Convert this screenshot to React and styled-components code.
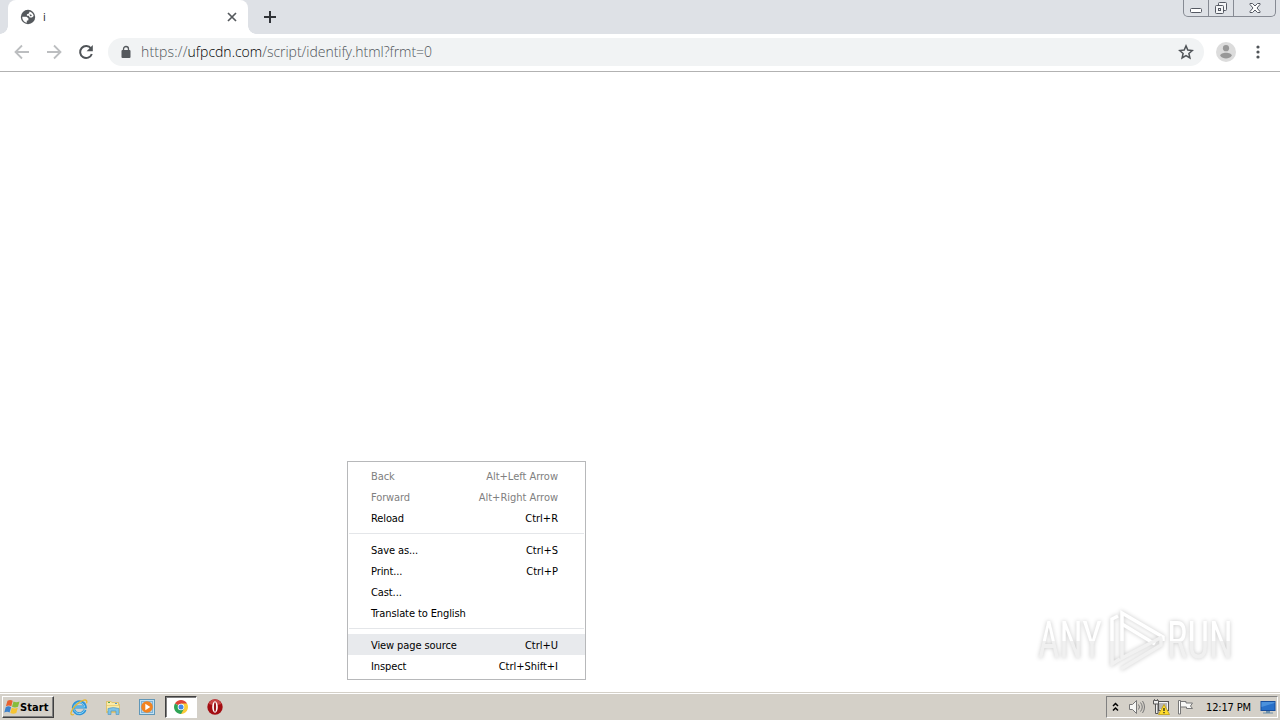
import React from 'react'
import styled, { createGlobalStyle } from 'styled-components'

const GlobalStyle = createGlobalStyle`
  body {
    margin: 0;
    background: #fff;
    overflow: hidden;
  }
  svg {
    display: block;
    flex: none;
  }
`

const Desktop = styled.div`
  position: relative;
  display: flex;
  flex-direction: column;
  width: 1280px;
  height: 720px;
  font-family: 'DejaVu Sans Condensed', 'DejaVu Sans', sans-serif;
  font-stretch: condensed;
  font-size: 11px;
  color: #000;
`

const TabStrip = styled.div`
  display: flex;
  height: 34px;
  background: #dee1e6;
  padding-left: 8px;
`

const Tab = styled.div`
  position: relative;
  box-sizing: border-box;
  display: flex;
  align-items: center;
  width: 240px;
  padding: 0 10px 0 12px;
  background: #fff;
  border-radius: 8px 8px 0 0;

  &::before,
  &::after {
    content: '';
    position: absolute;
    bottom: 0;
    width: 8px;
    height: 8px;
  }
  &::before {
    left: -8px;
    background: radial-gradient(circle at 0 0, #dee1e6 7.5px, #fff 8px);
  }
  &::after {
    right: -8px;
    background: radial-gradient(circle at 100% 0, #dee1e6 7.5px, #fff 8px);
  }
`

const TabTitle = styled.div`
  flex: 1;
  margin-left: 7px;
  color: #202124;
`

const NewTab = styled.div`
  display: flex;
  align-items: center;
  margin-left: 15px;
`

const WindowButtons = styled.div`
  box-sizing: border-box;
  display: flex;
  width: 93px;
  height: 17px;
  margin: 0 4px 0 auto;
  border: 1px solid #868a93;
  border-top: 0;
  border-radius: 0 0 5px 5px;
`

const WindowButton = styled.div`
  box-sizing: border-box;
  display: flex;
  align-items: center;
  justify-content: center;
  width: ${({ $width }) => $width}px;
  border-right: ${({ $last }) => ($last ? '0' : '1px solid #868a93')};
`

const Toolbar = styled.div`
  box-sizing: border-box;
  display: flex;
  align-items: center;
  height: 38px;
  padding: 0 12px 1px 12px;
  background: #fff;
  border-bottom: 1px solid #b2b2b2;
`

const NavButton = styled.div`
  display: flex;
  justify-content: center;
  width: 20px;
  margin-right: 12px;
`

const Omnibox = styled.div`
  box-sizing: border-box;
  display: flex;
  align-items: center;
  width: 1096px;
  height: 28px;
  padding: 0 10px 0 13px;
  background: #f1f3f4;
  border-radius: 14px;
`

const Url = styled.div`
  display: flex;
  flex: 1;
  margin-left: 10px;
  font-family: 'Open Sans', 'Noto Sans', sans-serif;
  font-stretch: normal;
  font-weight: 300;
  font-size: 14px;
  line-height: 20px;
`

const UrlPart = styled.span`
  color: ${({ $strong }) => ($strong ? '#000' : '#50555a')};
  letter-spacing: ${({ $spacing }) => $spacing || 0}px;
`

const Avatar = styled.div`
  margin-left: 12px;
`

const Dots = styled.div`
  margin-left: 20px;
`

const Page = styled.div`
  flex: 1;
  background: #fff;
`

const Menu = styled.div`
  position: absolute;
  left: 347px;
  top: 461px;
  box-sizing: border-box;
  width: 239px;
  height: 219px;
  padding-top: 3px;
  background: #fff;
  border: 1px solid #b7b8ba;
`

const MenuItem = styled.div`
  display: flex;
  justify-content: space-between;
  height: 21px;
  padding: 0 27px 0 23px;
  line-height: 23px;
  color: ${({ $disabled }) => ($disabled ? '#808080' : '#000')};
  background: ${({ $hover }) => ($hover ? '#e8eaed' : 'transparent')};
`

const MenuText = styled.span`
  letter-spacing: ${({ $spacing }) => $spacing || 0}px;
  margin-right: ${({ $spacing }) => -($spacing || 0)}px;
  white-space: nowrap;
`

const Separator = styled.div`
  height: 1px;
  margin: 5px 1px;
  background: #e4e6e9;
`

const Watermark = styled.div`
  position: absolute;
  left: 1038px;
  top: 609px;
  display: flex;
  align-items: flex-start;
  filter: drop-shadow(0 0 2px rgba(0, 0, 0, 0.22));
`

const WatermarkWord = styled.span`
  width: ${({ $width }) => $width}px;
  font-family: Roboto, sans-serif;
  font-size: 52px;
  line-height: 64px;
  white-space: nowrap;
`

const Squeezed = styled.span`
  display: inline-block;
  transform: scaleX(${({ $scale }) => $scale});
  transform-origin: 0 50%;
  color: transparent;
  background: linear-gradient(#fff 50%, #f0f0f0 50%);
  background-clip: text;
`

const Taskbar = styled.div`
  box-sizing: border-box;
  display: flex;
  align-items: flex-start;
  height: 28px;
  padding: 2px 2px 0 2px;
  background: #d4d0c8;
  border-top: 1px solid #d4d0c8;
  box-shadow: inset 0 1px #fff;
`

const StartButton = styled.div`
  box-sizing: border-box;
  display: flex;
  align-items: center;
  width: 52px;
  height: 22px;
  margin-top: 1px;
  padding-left: 1px;
  border: 1px solid;
  border-color: #fff #404040 #404040 #fff;
  box-shadow: inset -1px -1px #808080;
  font-weight: bold;
  letter-spacing: 0.1px;
`

const StartLabel = styled.span`
  margin-left: -1px;
`

const TaskButton = styled.div`
  box-sizing: border-box;
  display: flex;
  align-items: center;
  justify-content: center;
  width: 32px;
  height: 22px;
  margin: 1px 0 0 ${({ $gap }) => $gap || 2}px;
  background: ${({ $active }) => ($active ? '#fff' : 'transparent')};
  border: ${({ $active }) => ($active ? '1px solid' : '0')};
  border-color: #404040 #fff #fff #404040;
  box-shadow: ${({ $active }) => ($active ? 'inset 1px 1px #808080' : 'none')};
`

const Tray = styled.div`
  box-sizing: border-box;
  display: flex;
  align-items: center;
  width: 172px;
  height: 22px;
  margin: 1px 0 0 auto;
  padding-left: 5px;
  border: 1px solid;
  border-color: #808080 #fff #fff #808080;
`

const Clock = styled.div`
  width: 46px;
  margin: 0 8px 0 12px;
  font-size: 11px;
  letter-spacing: -0.15px;
  white-space: nowrap;
`

const TrayIcon = styled.div`
  margin-left: ${({ $gap }) => $gap}px;
`

const GlobeIcon = () => (
  <svg width="16" height="16" viewBox="0 0 16 16">
    <circle cx="8" cy="8" r="7.2" fill="#55595d" />
    <path d="M9.600 2.500c2.200.6 3.800 2.300 4.100 4.500l-1.700 1.400H9.800L8.700 6.700H6.900V5.300l2-.8Z" fill="#fff" />
    <path d="M2.300 7.800h4.200l1.900 1.400v2l-1.600.5v2C4.200 13.300 2.100 10.900 2.300 7.800Z" fill="#fff" />
    <path d="m9.500 5.200 1.800.5.5 1.200-1.600.4Z" fill="#55595d" />
  </svg>
)

const CloseIcon = () => (
  <svg width="12" height="12" viewBox="0 0 12 12" stroke="#55595d" strokeWidth="1.7">
    <path d="m2 2 8 8M10 2l-8 8" />
  </svg>
)

const PlusIcon = () => (
  <svg width="14" height="14" viewBox="0 0 14 14" stroke="#303338" strokeWidth="2">
    <path d="M7 1v12M1 7h12" />
  </svg>
)

const MinimizeIcon = () => (
  <svg width="14" height="12" viewBox="0 0 14 12">
    <rect x="1.500" y="6.500" width="11" height="4" rx="1" fill="#fff" stroke="#555963" />
  </svg>
)

const RestoreIcon = () => (
  <svg width="14" height="14" viewBox="0 0 14 14" fill="#f4f5f7" stroke="#555963">
    <rect x="4.5" y="1.5" width="8" height="8" rx="1" />
    <rect x="1.5" y="4.5" width="8" height="8" rx="1" />
    <rect x="4.5" y="7.5" width="2" height="2" />
  </svg>
)

const WindowCloseIcon = () => (
  <svg width="14" height="12" viewBox="0 0 14 12">
    <path d="M2 1.500h2.500L7 4l2.500-2.500H12v1L9 6l3 3.500v1H9.500L7 8l-2.500 2.500H2v-1L5 6 2 2.500Z" fill="#fff" stroke="#555963" />
  </svg>
)

const ArrowIcon = ({ flip }) => (
  <svg width="16" height="16" viewBox="0 0 16 16" fill="none" stroke="#bcbec0" strokeWidth="1.8">
    <path d={flip ? 'M1 8h13M8 1.5 14.5 8 8 14.5' : 'M15 8H2M8 1.5 1.5 8 8 14.5'} />
  </svg>
)

const ReloadIcon = () => (
  <svg width="16" height="16" viewBox="0 0 16 16">
    <path d="M13 4.5A6 6 0 1 0 13.8 10" fill="none" stroke="#505458" strokeWidth="2" />
    <path d="M14.8 1v6.2H8.6Z" fill="#505458" />
  </svg>
)

const LockIcon = () => (
  <svg width="10" height="14" viewBox="0 0 10 14">
    <rect x="0.5" y="5" width="9" height="8" rx="1" fill="#55595d" />
    <path d="M2.5 5.5V4a2.5 2.5 0 0 1 5 0v1.500" fill="none" stroke="#55595d" strokeWidth="1.3" />
  </svg>
)

const StarIcon = () => (
  <svg width="16" height="16" viewBox="0 0 16 16">
    <path d="m8 1.900 1.800 4.200 4.500.4-3.400 3 1 4.500L8 11.600 4.100 14l1-4.500-3.400-3 4.500-.4Z" fill="none" stroke="#505458" strokeWidth="1.500" />
  </svg>
)

const AvatarIcon = () => (
  <svg width="20" height="20" viewBox="0 0 20 20">
    <circle cx="10" cy="10" r="10" fill="#dcdcdc" />
    <circle cx="10" cy="6.200" r="3.100" fill="#989898" />
    <path d="M4.200 13.700c0-4 11.600-4 11.600 0-2.600 3.700-9 3.700-11.600 0Z" fill="#989898" />
  </svg>
)

const DotsIcon = () => (
  <svg width="4" height="14" viewBox="0 0 4 14" fill="#505458">
    <circle cx="2" cy="2" r="1.600" />
    <circle cx="2" cy="7" r="1.600" />
    <circle cx="2" cy="12" r="1.600" />
  </svg>
)

const PlayLogo = () => (
  <svg width="62" height="64" viewBox="0 0 62 64" fill="none" strokeWidth="3.500">
    <path d="M7 32V10l6-3" stroke="#fff" />
    <path d="M17 32V4l41 24v4" stroke="#fff" />
    <path d="M17 15 50 35" stroke="#fff" />
    <path d="M17 32v17l40-21M7 32v23l8-5" stroke="#f1f1f1" />
    <path d="M16 60l40-24v-6" stroke="#f1f1f1" />
  </svg>
)

const WindowsLogo = () => (
  <svg width="17" height="16" viewBox="0 0 17 16">
    <path d="M3.500 1.800c2-1.300 3.700-1 5.200 0L7.300 7.200c-1.700-1-3.400-1-5.400 0Z" fill="#e9612f" />
    <path d="M9.500 2.500c1.900 1 3.900 1 6 0l-1.500 5.300c-2 1-4 1-6 0Z" fill="#86bd3c" />
    <path d="M1.700 8.200c2-1.200 3.700-1 5.400 0l-1.500 5.300c-1.600-1-3.300-1-5.300 0Z" fill="#3e82cc" />
    <path d="M7.800 8.800c1.900 1 3.900 1 6 0l-1.500 5.300c-2 1-4 1-6 0Z" fill="#f6c432" />
  </svg>
)

const ExplorerIcon = () => (
  <svg width="18" height="18" viewBox="0 0 18 18" fill="none">
    <path d="M15 11.800A6 6 0 1 1 15.300 9H5" stroke="#2d93d8" strokeWidth="3" />
    <path d="M14.700 11.500A5.600 5.600 0 1 1 14.800 9H5" stroke="#8ad6f6" strokeWidth="1" />
    <path d="M4 16.500C-1 18.500.5 12 6 7c5-4.800 12.500-7.500 10.500-1.700" stroke="#e8b72e" strokeWidth="1.300" />
  </svg>
)

const FolderIcon = () => (
  <svg width="16" height="16" viewBox="0 0 16 16">
    <path d="M1 2h5l1 1h7v2h1v9H1Z" fill="#dfc471" />
    <path d="M2 3h4l1 1h6v2h1v6H2Z" fill="#faeba8" />
    <path d="M2 6h12v1H2Z" fill="#ecd27c" />
    <path d="M3 3h2v1H3Z" fill="#58a951" />
    <path d="M10 4h2v1h-2Z" fill="#5298ce" />
    <path d="M3 15.500V9.500q5-2 11 0v6h-3v-3.500H6v3.500Z" fill="#7cc3e8" stroke="#4b92bd" strokeWidth=".6" />
  </svg>
)

const MediaIcon = () => (
  <svg width="16" height="16" viewBox="0 0 16 16">
    <rect x=".5" y=".5" width="15" height="15" fill="#c2e1f3" stroke="#6097b8" />
    <rect x="2.500" y="2.500" width="11" height="11" fill="#b3d6ee" stroke="#7eb2d6" />
    <circle cx="8" cy="8" r="5.800" fill="#f28320" />
    <path d="m6.300 4.800 5 3.200-5 3.200Z" fill="#fff" />
  </svg>
)

const ChromeIcon = () => (
  <svg width="14" height="14" viewBox="0 0 14 14">
    <path d="M7 7 .94 3.500A7 7 0 0 1 13.060 3.500Z" fill="#df4437" />
    <path d="M7 7V3.500h6.060A7 7 0 0 1 7 14Z" fill="#fbcb38" />
    <path d="M.94 3.500A7 7 0 0 0 7 14l3-5.300-3-1.700Z" fill="#2fa455" />
    <circle cx="7" cy="7" r="3.300" fill="#fff" />
    <circle cx="7" cy="7" r="2.500" fill="#4587e8" />
  </svg>
)

const OperaIcon = () => (
  <svg width="16" height="16" viewBox="0 0 16 16">
    <circle cx="8" cy="8" r="7.700" fill="#a30d12" />
    <path d="M1.500 5a7 7 0 0 1 13 0Q8 7 1.500 5Z" fill="#c84545" />
    <ellipse cx="8" cy="8" rx="2.800" ry="5.800" fill="#fff" />
    <ellipse cx="8" cy="8" rx="1.100" ry="4.800" fill="#9b1419" />
  </svg>
)

const ChevronsIcon = () => (
  <svg width="7" height="11" viewBox="0 0 7 11" fill="none" stroke="#000" strokeWidth="1.500">
    <path d="m1 4 2.500-2.500L6 4M1 8.500 3.500 6 6 8.500" />
  </svg>
)

const SpeakerIcon = () => (
  <svg width="16" height="16" viewBox="0 0 16 16" fill="none" stroke="#777">
    <path d="M.5 5.500h3l4-4v13l-4-4h-3Z" fill="#f6f6f4" />
    <path d="M9.500 5.500q2 2.500 0 5M11.500 3.500q3.500 4.500 0 9M13.500 2q4 6 0 12" />
  </svg>
)

const NetworkIcon = () => (
  <svg width="17" height="16" viewBox="0 0 17 16">
    <rect x="5.500" y="2.500" width="10" height="9" fill="#b6b6b6" stroke="#555" />
    <path d="M6 3.500h8.500v7H7" fill="none" stroke="#f5f5f5" />
    <path d="M.5 1.500h5V5h-5ZM2.500 5v9.500H5V5" fill="#eee" stroke="#555" />
    <path d="M1.500 0v2M4.500 0v2" stroke="#666" />
    <path d="m11 5.500 5.500 10h-11Z" fill="#ffdc2b" stroke="#b99706" strokeWidth=".7" />
    <path d="M11 9v3M11 13v1.300" stroke="#222" strokeWidth="1.300" />
  </svg>
)

const FlagIcon = () => (
  <svg width="17" height="16" viewBox="0 0 17 16">
    <path d="M3.500 2.500h5.500v1.500h6.500l-2 3 2 2.500H9.500V8h-6Z" fill="#f8f8f6" stroke="#777" />
    <path d="M1.500 1.500h2V15h-2Z" fill="#fff" stroke="#777" />
  </svg>
)

const MonitorIcon = () => (
  <svg width="16" height="16" viewBox="0 0 16 16">
    <rect x=".5" y="2" width="15" height="10" fill="#174e9d" />
    <rect x="1.500" y="3" width="13" height="8" fill="#2870c9" />
    <path d="M1.500 3h13v1l-13 4Z" fill="#4b91dc" />
    <path d="M6 12h4v1.500h3v1H3v-1h3Z" fill="#6c8faa" />
  </svg>
)

const menuGroups = [
  [
    { label: 'Back', keys: 'Alt+Left Arrow', disabled: true },
    { label: 'Forward', keys: 'Alt+Right Arrow', disabled: true },
    { label: 'Reload', keys: 'Ctrl+R' },
  ],
  [
    { label: 'Save as...', keys: 'Ctrl+S' },
    { label: 'Print...', keys: 'Ctrl+P' },
    { label: 'Cast...' },
    { label: 'Translate to English' },
  ],
  [
    { label: 'View page source', keys: 'Ctrl+U', hover: true },
    { label: 'Inspect', keys: 'Ctrl+Shift+I' },
  ],
]

const ContextMenu = () => (
  <Menu>
    {menuGroups.map((group, i) => (
      <React.Fragment key={i}>
        {i > 0 && <Separator />}
        {group.map((item) => (
          <MenuItem key={item.label} $disabled={item.disabled} $hover={item.hover}>
            <MenuText $spacing={-0.1}>{item.label}</MenuText>
            {item.keys && <MenuText $spacing={-0.02}>{item.keys}</MenuText>}
          </MenuItem>
        ))}
      </React.Fragment>
    ))}
  </Menu>
)

const App = () => (
  <>
    <GlobalStyle />
    <Desktop>
      <TabStrip>
        <Tab>
          <GlobeIcon />
          <TabTitle>i</TabTitle>
          <CloseIcon />
        </Tab>
        <NewTab><PlusIcon /></NewTab>
        <WindowButtons>
          <WindowButton $width={25}><MinimizeIcon /></WindowButton>
          <WindowButton $width={25}><RestoreIcon /></WindowButton>
          <WindowButton $width={41} $last><WindowCloseIcon /></WindowButton>
        </WindowButtons>
      </TabStrip>
      <Toolbar>
        <NavButton><ArrowIcon /></NavButton>
        <NavButton><ArrowIcon flip /></NavButton>
        <NavButton><ReloadIcon /></NavButton>
        <Omnibox>
          <LockIcon />
          <Url>
            <UrlPart $spacing={0.15}>https://</UrlPart>
            <UrlPart $strong>ufpcdn.com</UrlPart>
            <UrlPart $spacing={-0.03}>/script/identify.html?frmt=0</UrlPart>
          </Url>
          <StarIcon />
        </Omnibox>
        <Avatar><AvatarIcon /></Avatar>
        <Dots><DotsIcon /></Dots>
      </Toolbar>
      <Page />
      <Taskbar>
        <StartButton>
          <WindowsLogo />
          <StartLabel>Start</StartLabel>
        </StartButton>
        <TaskButton $gap={9}><ExplorerIcon /></TaskButton>
        <TaskButton><FolderIcon /></TaskButton>
        <TaskButton><MediaIcon /></TaskButton>
        <TaskButton $active><ChromeIcon /></TaskButton>
        <TaskButton><OperaIcon /></TaskButton>
        <Tray>
          <ChevronsIcon />
          <TrayIcon $gap={10}><SpeakerIcon /></TrayIcon>
          <TrayIcon $gap={8}><NetworkIcon /></TrayIcon>
          <TrayIcon $gap={7}><FlagIcon /></TrayIcon>
          <Clock>12:17 PM</Clock>
          <MonitorIcon />
        </Tray>
      </Taskbar>
      <Watermark>
        <WatermarkWord $width={67}><Squeezed $scale={0.72}>ANY</Squeezed></WatermarkWord>
        <PlayLogo />
        <WatermarkWord $width={72}><Squeezed $scale={0.74}>RUN</Squeezed></WatermarkWord>
      </Watermark>
      <ContextMenu />
    </Desktop>
  </>
)

export default App
